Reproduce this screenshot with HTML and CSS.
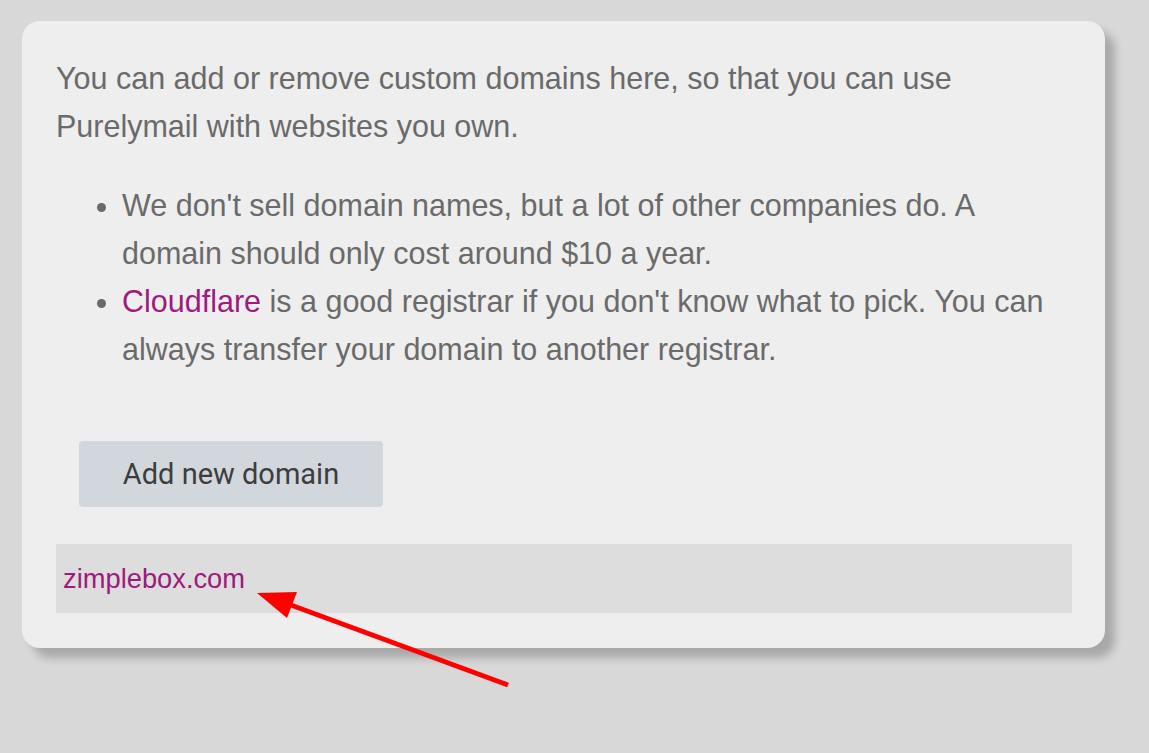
FILE: index.html
```html
<!DOCTYPE html>
<html>
<head>
<meta charset="utf-8">
<link rel="stylesheet" href="styles.css">
</head>
<body>
<div class="card">
  <p class="intro">You can add or remove custom domains here, so that you can use Purelymail with websites you own.</p>
  <ul class="tips">
    <li>We don't sell domain names, but a lot of other companies do. A domain should only cost around $10 a year.</li>
    <li><a class="link" href="#">Cloudflare</a> is a good registrar if you don't know what to pick. You can always transfer your domain to another registrar.</li>
  </ul>
  <div class="actions">
    <button class="btn">Add new domain</button>
  </div>
  <div class="domain-row">
    <a class="domain" href="#">zimplebox.com</a>
  </div>
</div>
<svg class="arrow" width="1149" height="753" viewBox="0 0 1149 753">
  <line x1="508" y1="685" x2="280" y2="601" stroke="#ff0000" stroke-width="5"/>
  <polygon points="257,593 297,592 287,618" fill="#ff0000"/>
</svg>
</body>
</html>
```
FILE: styles.css
```css
html, body {
  margin: 0;
  padding: 0;
}
body {
  background: #d8d8d8;
  width: 1149px;
  height: 753px;
  overflow: hidden;
  position: relative;
  font-family: "Liberation Sans", Arial, sans-serif;
}
.card {
  margin: 21px 0 0 22px;
  width: 1083px;
  box-sizing: border-box;
  background: #eeeeee;
  border-radius: 18px;
  padding: 33px 33px 35px 34px;
  box-shadow: 10px 10px 8px rgba(0,0,0,0.22);
}
.intro {
  margin: 0;
  font-size: 30.5px;
  line-height: 48px;
  color: #6a6a6a;
}
.tips {
  margin: 31px 0 0 0;
  padding-left: 66px;
  font-size: 30.5px;
  line-height: 48px;
  color: #6a6a6a;
}
.link {
  color: #9e1a7c;
  text-decoration: none;
}
.actions {
  padding: 68px 0 0 23px;
}
.btn {
  font-family: Roboto, "Liberation Sans", sans-serif;
  font-size: 29px;
  color: #3d3d3d;
  background: #d2d6dd;
  border: none;
  border-radius: 4px;
  width: 304px;
  height: 66px;
  padding: 0;
}
.domain-row {
  margin-top: 37px;
  background: #dddddd;
  height: 69px;
  display: flex;
  align-items: center;
  padding-left: 7px;
}
.domain {
  color: #9e1a7c;
  text-decoration: none;
  font-size: 27.3px;
}
.arrow {
  position: absolute;
  left: 0;
  top: 0;
}
```
